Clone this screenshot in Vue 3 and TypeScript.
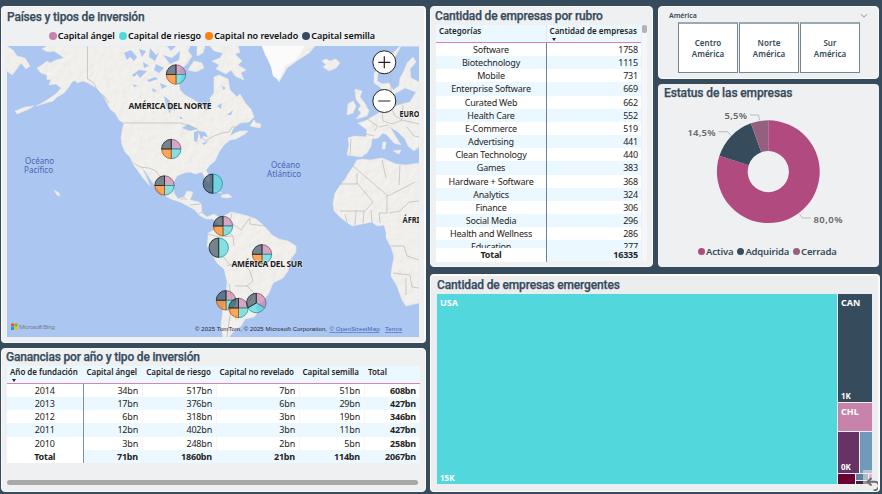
<script setup lang="ts">
interface Pin { x: number; y: number; kinds: string[] }
interface Cell { name: string; count: number }

const colors: Record<string, string> = {
  angel: '#c783ac', riesgo: '#52d8dc', oculto: '#ff7f0e', semilla: '#364b5b',
}
const mapLegend = [
  { key: 'angel', label: 'Capital ángel' },
  { key: 'riesgo', label: 'Capital de riesgo' },
  { key: 'oculto', label: 'Capital no revelado' },
  { key: 'semilla', label: 'Capital semilla' },
]
const all = ['angel', 'riesgo', 'oculto', 'semilla']
const pins: Pin[] = [
  { x: 176, y: 74.5, kinds: all },
  { x: 171.3, y: 149, kinds: all },
  { x: 164.5, y: 185.5, kinds: all },
  { x: 212.8, y: 183.7, kinds: ['riesgo', 'semilla'] },
  { x: 223, y: 226, kinds: all },
  { x: 218.7, y: 247.7, kinds: ['riesgo', 'semilla'] },
  { x: 262, y: 254.3, kinds: all },
  { x: 226, y: 300.3, kinds: all },
  { x: 238.5, y: 308, kinds: all },
  { x: 256.3, y: 303, kinds: ['angel', 'riesgo', 'semilla'] },
]

function point(cx: number, cy: number, r: number, share: number): string {
  const a = share * Math.PI * 2
  return `${(cx + r * Math.sin(a)).toFixed(2)} ${(cy - r * Math.cos(a)).toFixed(2)}`
}
function wedge(pin: Pin, i: number): string {
  const n = pin.kinds.length
  return `M${pin.x} ${pin.y}L${point(pin.x, pin.y, 9.7, i / n)}A9.7 9.7 0 0 1 ${point(pin.x, pin.y, 9.7, (i + 1) / n)}Z`
}
const strokes: Record<string, string> = {
  angel: '#85526f', riesgo: '#23969b', oculto: '#a95510', semilla: '#16222b',
}

const years = [
  ['2014', '34bn', '517bn', '7bn', '51bn', '608bn'],
  ['2013', '17bn', '376bn', '6bn', '29bn', '427bn'],
  ['2012', '6bn', '318bn', '3bn', '19bn', '346bn'],
  ['2011', '12bn', '402bn', '3bn', '11bn', '427bn'],
  ['2010', '3bn', '248bn', '2bn', '5bn', '258bn'],
  ['Total', '71bn', '1860bn', '21bn', '114bn', '2067bn'],
]
const yearHeads = ['Año de fundación', 'Capital ángel', 'Capital de riesgo', 'Capital no revelado', 'Capital semilla', 'Total']

const categories: Cell[] = [
  { name: 'Software', count: 1758 },
  { name: 'Biotechnology', count: 1115 },
  { name: 'Mobile', count: 731 },
  { name: 'Enterprise Software', count: 669 },
  { name: 'Curated Web', count: 662 },
  { name: 'Health Care', count: 552 },
  { name: 'E-Commerce', count: 519 },
  { name: 'Advertising', count: 441 },
  { name: 'Clean Technology', count: 440 },
  { name: 'Games', count: 383 },
  { name: 'Hardware + Software', count: 368 },
  { name: 'Analytics', count: 324 },
  { name: 'Finance', count: 306 },
  { name: 'Social Media', count: 296 },
  { name: 'Health and Wellness', count: 286 },
  { name: 'Education', count: 277 },
]
const regions = ['Centro', 'Norte', 'Sur']

const status = [
  { label: 'Activa', from: 0, to: 0.8, color: '#b14a7e' },
  { label: 'Adquirida', from: 0.8, to: 0.945, color: '#364b5b' },
  { label: 'Cerrada', from: 0.945, to: 1, color: '#93617f' },
]
function ring(from: number, to: number): string {
  const big = to - from > 0.5 ? 1 : 0
  const cx = 110.3
  const cy = 63.7
  return `M${point(cx, cy, 51.4, from)}A51.4 51.4 0 ${big} 1 ${point(cx, cy, 51.4, to)}`
    + `L${point(cx, cy, 20.6, to)}A20.6 20.6 0 ${big} 0 ${point(cx, cy, 20.6, from)}Z`
}

const land = [
  // North and Central America
  'M47 46L42 49L48 52L54 51L60 55L64 58L56 60L50 63L47 61L42 65L37 68L41 73L47 75L47 80L51 79L49 85L56 84L61 88L57 93L50 98L42 103L36 106L46 103L53 101L57 97L64 93L69 87L71 83L75 80L77 83L83 81L88 83L95 87L100 92L104 97L107 103L110 109L115 113L119 120L124 123L122 131L121 138L122 145L125 152L130 157L133 164L138 171L143 178L150 186L148 181L145 174L142 168L145 171L150 179L156 187L162 194L171 199L180 202L188 206L195 210L199 215L206 219L213 219L220 225L222 219L214 214L207 217L202 213L201 204L199 202L190 200L193 192L187 191L184 197L178 199L174 193L173 183L177 176L184 173L190 172L195 174L202 172L206 180L209 183L210 178L206 170L210 165L215 161L219 152L224 145L230 140L236 139L245 134L248 131L240 131L235 133L230 136L233 129L240 123L249 122L254 117L251 109L246 104L240 94L237 97L230 90L228 79L219 75L214 77L214 85L214 93L210 98L211 107L206 111L202 105L194 100L185 95L180 90L179 83L182 76L178 71L187 64L192 56L188 51L190 46Z',
  // Arctic islands
  'M194 61L202 63L204 68L196 72L188 70Z',
  'M197 46L205 46L203 53L197 56Z',
  'M210 46L238 46L240 52L235 54L242 61L238 65L246 70L241 73L244 80L235 76L231 70L226 74L216 69L219 65L212 61L220 58L223 53L214 51Z',
  'M250 126L254 120L256 123L261 124L260 128L255 127Z',
  // Greenland and Iceland
  'M262 46L266 56L271 61L273 72L279 82L282 77L287 68L298 60L309 53L315 46Z',
  'M322 61L326 65L323 67L329 71L336 68L340 63L336 59L330 61L326 59Z',
  // British Isles
  'M355 89L362 91L360 97L364 102L369 111L367 116L356 119L361 113L358 109L361 106L356 99Z',
  'M348 104L353 101L356 106L353 113L347 115Z',
  // Europe
  'M419 46L401 46L395 57L388 65L378 72L377 81L383 84L389 83L393 90L399 86L400 78L404 71L407 63L413 57L416 62L410 69L411 78L419 82L419 147L414 151L408 146L405 139L398 132L390 127L396 137L401 145L394 143L387 135L383 133L378 138L372 139L371 146L367 153L361 157L354 156L347 155L349 145L348 138L354 136L366 137L367 130L358 123L365 121L372 117L382 111L389 107L386 98L391 98L395 106L410 102L416 92L405 88L396 93L390 95L385 92L380 87L374 83L374 73L385 64L394 52L400 46Z',
  'M383 142L386 142L385 149L382 149Z',
  'M393 151L401 150L399 154Z',
  // Africa
  'M419 163L406 165L396 164L387 160L382 158L370 160L362 159L357 160L353 167L348 174L346 178L341 184L335 193L333 203L334 211L340 217L345 221L352 226L362 224L372 222L377 226L384 225L386 232L386 238L391 247L394 257L392 267L391 276L397 286L402 300L406 306L419 303Z',
  // South America
  'M220 221L224 216L231 212L240 214L248 216L256 219L262 224L267 229L272 235L279 239L288 241L296 246L296 252L290 260L288 271L283 278L273 283L269 293L263 301L255 307L258 312L254 317L245 319L241 326L235 330L229 337L223 337L221 325L223 310L226 298L227 281L224 269L217 263L211 252L207 246L208 238L208 233L214 230L219 226Z',
  // Small islands
  'M17 56L25 58L30 66L26 69L21 63L17 69L12 75L7 71L7 46L13 50Z',
  'M205 188L214 190L222 193L214 191Z',
  'M222 195L228 194L232 197L227 198L221 197Z',
  'M54 190L59 193L60 196L57 195Z',
  'M15 111L25 107L34 106L29 109L17 114Z',
]
const lakes = [
  'M124 53L131 50L137 57L134 61L130 57L127 60Z',
  'M132 75L139 70L147 71L140 78L137 74L134 77Z',
  'M147 80L155 77L158 79L149 82Z',
  'M164 96L169 100L175 111L171 109L170 114L166 105Z',
  'M182 128L188 124L197 129L190 131Z',
  'M194 132L199 131L197 142L194 141Z',
  'M199 131L205 132L208 137L203 136L201 140Z',
  'M202 143L209 141L204 145Z',
  'M139 49L146 51L142 57Z', 'M150 48L156 55L159 53L155 61L149 57Z',
  'M163 55L172 58L180 51L179 60L170 64Z',
  'M156 64L164 68L159 73L154 70Z',
  'M160 83L167 86L162 89Z', 'M143 62L149 66L144 68Z',
  'M217 106L222 103L221 109Z', 'M227 115L233 110L231 115Z',
  'M180 116L183 119L180 119Z', 'M222 86L226 88L223 90Z', 'M167 46L176 46L171 51Z',
  'M152 88L157 91L153 92Z', 'M133 84L138 86L134 87Z',
]
const borders = [
  'M87.500 46V79L94 83L98 92L104 96L109 103',
  'M124 123H180L190 126L197 129L201 136L205 141L214 136L222 133L229 132L232 127L237 127',
  'M132 162L140 167L149 168L156 171L161 178L167 182',
  'M181 200L184 198L187 200M190 205L200 204M198 214L202 212',
  'M223 217L222 227L233 236L234 246M232 213L230 222L241 230L249 219M208 234L219 237L233 236M218 239L219 252L226 260L231 266M250 217V224L265 226M227 266L240 261L250 271L253 281L247 286L235 286M229 284L232 301L227 337M247 286L254 293L249 301',
  'M357 173V184L337 184M353 166L388 196L415 182M357 183L373 202L365 211H340M387 195L387 213L379 213L380 223M345 214L347 222M356 211L355 225M364 211L363 223M371 210L372 222M389 213L400 211L409 202L419 201M391 246H404L407 256L419 260M393 273L410 275L412 287L419 288M406 278V295M382 160L386 178M400 165L399 185',
  'M365 117L374 124L378 126L374 131M374 136L366 134M351 139L350 155M382 112L383 121L392 124L402 120L419 124M391 107L395 116L402 120M379 127L388 125M403 105L402 119M407 127L414 136L419 137M391 97V70L398 55',
]
</script>

<template>
  <main class="dashboard">
    <div class="column left">
      <section class="panel map-panel">
        <h2>Países y tipos de inversión</h2>
        <div class="legend map-legend">
          <span v-for="l in mapLegend" :key="l.key"><i :class="l.key" />{{ l.label }}</span>
        </div>
        <svg class="map" viewBox="7 46 412 291" width="412" height="291">
          <defs>
            <filter id="relief" x="0" y="0" width="100%" height="100%">
              <feTurbulence type="fractalNoise" baseFrequency=".12" numOctaves="3" seed="4" />
              <feDiffuseLighting surfaceScale="1.1" lighting-color="#f6f5f2" result="lit">
                <feDistantLight azimuth="225" elevation="66" />
              </feDiffuseLighting>
              <feComposite in="lit" in2="SourceGraphic" operator="in" />
            </filter>
          </defs>
          <rect x="7" y="46" width="412" height="291" fill="#abc6f1" />
          <g fill="#f3f1ee" stroke="#e6e6e6" stroke-width=".6" stroke-linejoin="round">
            <path v-for="d in land" :key="d" :d="d" />
          </g>
          <g filter="url(#relief)" opacity=".3" fill="#fff">
            <path v-for="d in land" :key="d" :d="d" />
          </g>
          <path d="M262 46L266 56L271 67L273 76L279 80L285 66L296 59L305 46Z" fill="#fbfbfb" />
          <g fill="#abc6f1"><path v-for="d in lakes" :key="d" :d="d" /></g>
          <g fill="none" stroke="#b9b9b7" stroke-width=".7" stroke-linejoin="round">
            <path v-for="d in borders" :key="d" :d="d" />
          </g>
          <g class="sea">
            <text x="25" y="163.500" textLength="29">Océano</text>
            <text x="24" y="173" textLength="29">Pacífico</text>
            <text x="271" y="167.500" textLength="29">Océano</text>
            <text x="267" y="177" textLength="34">Atlántico</text>
          </g>
          <g v-for="(p, n) in pins" :key="n">
            <path
              v-for="(k, i) in p.kinds" :key="k" :d="wedge(p, i)" :fill="colors[k]"
              :stroke="strokes[k]" fill-opacity=".66" stroke-width=".8"
            />
          </g>
          <g class="land-name">
            <text x="128.500" y="108.500" textLength="83">AMÉRICA DEL NORTE</text>
            <text x="231.500" y="267" textLength="71">AMÉRICA DEL SUR</text>
            <text x="399.500" y="117" textLength="20" lengthAdjust="spacingAndGlyphs">EURO</text>
            <text x="402.500" y="222.500" textLength="17" lengthAdjust="spacingAndGlyphs">ÁFRI</text>
          </g>
          <g fill="#fff" stroke="#222" stroke-width="1">
            <circle cx="384.300" cy="62.300" r="11.500" />
            <circle cx="384.300" cy="101" r="11.500" />
            <path d="M378.300 62.300H390.300M384.300 56.300V68.300M378.300 101H390.300" stroke-width="1.200" />
          </g>
          <path d="M11 323.500h3v3h-3z" fill="#f25022" />
          <path d="M14.500 323.500h3v3h-3z" fill="#7fba00" />
          <path d="M11 327h3v3h-3z" fill="#00a4ef" />
          <path d="M14.500 327h3v3h-3z" fill="#ffb900" />
          <text class="bing" x="19" y="329.300" textLength="36">Microsoft Bing</text>
          <g class="credit">
            <text x="195" y="331" textLength="132">© 2025 TomTom, © 2025 Microsoft Corporation,</text>
            <text class="link" x="329.500" y="331" textLength="50">© OpenStreetMap</text>
            <text class="link" x="385" y="331" textLength="17">Terms</text>
          </g>
        </svg>
      </section>

      <section class="panel years-panel">
        <h2>Ganancias por año y tipo de inversión</h2>
        <div class="years">
          <div class="row head">
            <span v-for="(h, i) in yearHeads" :key="h">{{ h }}<b v-if="i === 0" class="sort" /></span>
          </div>
          <div v-for="y in years" :key="y[0]" class="row">
            <span v-for="(v, i) in y" :key="i">{{ v }}</span>
          </div>
        </div>
        <div class="scroll-x" />
      </section>
    </div>

    <div class="column right">
      <div class="top">
        <section class="panel categories-panel">
          <h2>Cantidad de empresas por rubro</h2>
          <div class="scroll-area">
            <div class="categories">
              <div class="row head"><span>Categorías</span><span>Cantidad de empresas<b class="sort" /></span></div>
              <div class="rows">
                <div v-for="c in categories" :key="c.name" class="row">
                  <span>{{ c.name }}</span><span>{{ c.count }}</span>
                </div>
              </div>
              <div class="row total"><span>Total</span><span>16335</span></div>
            </div>
            <div class="scroll-y"><i /></div>
          </div>
        </section>

        <div class="side">
          <section class="panel slicer">
            <header>
              <span>América</span>
              <svg width="8" height="6" viewBox="0 0 8 6"><path d="M1 1.200L4 4.200L7 1.200" fill="none" stroke="#8b929a" /></svg>
            </header>
            <div class="tiles">
              <button v-for="r in regions" :key="r" type="button">{{ r }}<br>América</button>
            </div>
          </section>

          <section class="panel status-panel">
            <h2>Estatus de las empresas</h2>
            <svg class="donut" viewBox="0 0 221 130" width="221" height="130">
              <path v-for="s in status" :key="s.label" :d="ring(s.from, s.to)" :fill="s.color" />
              <g fill="none" stroke="#b9bcc0">
                <path d="M92 7H100.500L101.700 12.500M60.500 23.700H69.500L73.500 28M141 105.500L144.500 110H152.500" />
              </g>
              <g class="share">
                <text x="66.500" y="11" textLength="22.500">5,5%</text>
                <text x="29.500" y="28" textLength="28">14,5%</text>
                <text x="155.500" y="115" textLength="29">80,0%</text>
              </g>
            </svg>
            <div class="legend status-legend">
              <span v-for="s in status" :key="s.label"><i :class="s.label.toLowerCase()" />{{ s.label }}</span>
            </div>
          </section>
        </div>
      </div>

      <section class="panel tree-panel">
        <h2>Cantidad de empresas emergentes</h2>
        <div class="tree">
          <div class="leaf usa"><span>USA</span><span>15K</span></div>
          <div class="leaf can"><span>CAN</span><span>1K</span></div>
          <div class="leaf chl"><span>CHL</span></div>
          <div class="pair">
            <div class="leaf plum"><span>0K</span></div>
            <div class="leaf blue" />
          </div>
          <div class="tiny">
            <div class="wine" /><div class="slate" /><div class="pink" /><div class="night" />
          </div>
        </div>
        <div class="undo">
          <svg width="18" height="23" viewBox="0 0 18 23">
            <path d="M8.500 8L4.500 11.800L8.500 15.500M5 11.800H11.500C15.500 11.800 16.500 15 15.500 17.500C14.800 19.300 13 20.500 10.500 20.500" fill="none" stroke="#6b6b6b" stroke-width="2" />
          </svg>
        </div>
      </section>
    </div>
  </main>
</template>

<style>
body { background: #364b5b; overflow: hidden; }
</style>

<style scoped>
* { box-sizing: border-box; }
.dashboard {
  width: 882px; height: 494px; padding: 6px 2px 2px 1px; background: #364b5b;
  display: flex; gap: 4px; font-family: "Noto Sans", "Open Sans", sans-serif; color: #252423;
}
.column { display: flex; flex-direction: column; }
.left { width: 425px; gap: 5px; }
.right { width: 450px; gap: 7px; }
.panel { background: #eff0f2; border-radius: 4px; border: 1px solid #f9f9fa; overflow: hidden; display: flex; flex-direction: column; }
h2 {
  margin: 0; font: 500 12px/14px Roboto, sans-serif; color: #364b5b;
  white-space: nowrap; -webkit-text-stroke: .25px #364b5b;
}
.map-panel { height: 337px; padding: 3px 5px; border-right: 2px solid #fff; }
.years-panel { height: 144px; padding: 1px 4px 0 5px; }
.map-panel h2 { letter-spacing: -.2px; }
.years-panel h2 { letter-spacing: -.19px; margin-left: -1px; }
.legend { display: flex; font-weight: 600; white-space: nowrap; }
.legend span { display: flex; align-items: center; }
.legend i { width: 8px; height: 8px; border-radius: 50%; }
.map-legend { height: 13px; margin: 5px 0 4px 42px; font-size: 9px; gap: 4.300px; letter-spacing: -.03px; color: #111; }
.map-legend i { margin-right: .8px; }
.angel { background: #c783ac; }
.riesgo { background: #52d8dc; }
.oculto { background: #ff7f0e; }
.semilla { background: #364b5b; }
.map { display: block; flex: none; }
.sea { font-size: 8px; fill: #4c62b4; }
.land-name { font-size: 8.500px; font-weight: 700; fill: #1d1d1d; stroke: #fff; stroke-width: 1.200px; stroke-opacity: .6; paint-order: stroke; }
.bing { font-size: 6px; fill: #757b88; }
.credit { font: 6px "Liberation Sans", sans-serif; fill: #1e2530; }
.link { fill: #4160b8; text-decoration: underline; }

.row { display: grid; height: 13.170px; font-size: 9px; line-height: 13px; letter-spacing: -.2px; background: #fff; white-space: nowrap; }
.row:nth-child(odd):not(.head) { background: #ecf8ff; }
.row span { text-align: right; position: relative; }
.row.head { height: 18px; background: #ecf8ff; border-bottom: 1px solid #d883b0; font-size: 8px; font-weight: 600; letter-spacing: -.1px; line-height: 12px; }
.sort { position: absolute; left: 5px; bottom: 1px; border: 2.500px solid transparent; border-top: 3px solid #222; border-bottom: 0; }
.years { margin-top: 2px; width: 413px; }
.years .row { grid-template-columns: 76.500px 59.500px 74px 83px 65px 55px; }
.years .row span { padding-right: 4px; border-right: 1px solid #f3f5f7; }
.years .row span:first-child { text-align: center; padding: 0; border-right: 1px solid #7e909e; }
.years .row:not(.head) span:last-child, .years .row:last-child { font-weight: 700; }
.years .row:last-child { background: #ecf8ff; }
.years .row:last-child span:first-child { background: #fff; }
.years .row.head { letter-spacing: -.04px; }
.years .row.head span { border-color: transparent; padding-right: 5px; }
.years .row.head span:first-child { border-color: transparent; text-align: left; padding: 0 0 0 3px; }
.years .row.head span:last-child { text-align: left; padding-left: 3px; }
.years .row:not(.head) span:last-child { padding-right: 3px; }
.scroll-x { height: 5px; width: 411px; border-radius: 3px; background: #a8a8a6; margin-top: 17px; }

.top { display: flex; gap: 5px; height: 261px; }
.categories-panel { width: 223px; padding: 2px 5px; }
.categories-panel h2 { margin-left: -1px; letter-spacing: -.16px; }
.scroll-area { display: flex; margin-top: 2px; }
.categories { width: 205px; }
.categories .row { grid-template-columns: 111px 94px; }
.categories .row span:first-child { text-align: center; border-right: 1px solid #6f8291; }
.categories .row span:last-child { padding-right: 3px; }
.categories .row.head { letter-spacing: .03px; }
.categories .row.head span:last-child { padding-right: 4px; }
.categories .row.head span:first-child { text-align: left; padding-left: 3px; border-color: #dfeaf1; }
.rows { height: 205px; overflow: hidden; }
.rows .row:nth-child(odd) { background: #fff; }
.rows .row:nth-child(even) { background: #ecf8ff; }
.categories .row.total { font-weight: 700; background: #ecf8ff; line-height: 14px; }
.total span:first-child { background: #fff; }
.scroll-y { width: 6px; margin-left: 1px; background: #f5f6f8; }
.scroll-y i { display: block; width: 5px; height: 8px; border-radius: 2px; background: #b1b1b1; }

.side { width: 221px; display: flex; flex-direction: column; gap: 5px; }
.slicer { height: 73px; padding: 3px 10px 0; }
.slicer header { height: 11px; display: flex; align-items: center; justify-content: space-between; font-size: 7px; font-weight: 600; color: #364b5b; letter-spacing: -.05px; }
.tiles { display: flex; gap: 1px; padding: 1px 0 0 9px; }
.tiles button {
  width: 60px; height: 51px; padding: 0; background: #fff; border: 1px solid #748692;
  border-top: 2px solid #9ba9b2; font: 600 8px/11px "Noto Sans", sans-serif; letter-spacing: .05px; color: #364b5b;
}
.status-panel { height: 183px; padding: 2px 0 0; border: 0; }
.status-panel h2 { padding-left: 6px; letter-spacing: -.12px; }
.donut { display: block; margin-top: 8px; flex: none; }
.share { font-size: 9.500px; font-weight: 600; fill: #666; }
.status-legend { height: 13px; margin: 7px 0 0 40px; font-size: 9.500px; gap: 4px; color: #364b5b; letter-spacing: -.18px; }
.status-legend i { width: 7px; height: 7px; margin-right: 1px; }
.activa { background: #b14a7e; }
.adquirida { background: #364b5b; }
.cerrada { background: #93617f; }

.tree-panel { height: 218px; padding: 2px 6px; border: 2px solid #fbfbfc; border-left-width: 1px; border-bottom-width: 1px; background: #ecedef; position: relative; }
.tree-panel h2 { letter-spacing: -.14px; }
.tree { margin-top: 2px; width: 435px; height: 190px; display: grid; gap: 1px; grid-template: 108px 28px 41px 10px / 400px 34px; }
.leaf { color: #fff; font-size: 9px; font-weight: 700; line-height: 12px; padding: 3px 3px 0; display: flex; flex-direction: column; justify-content: space-between; }
.leaf span:nth-child(2) { font-size: 8px; }
.usa { grid-row: 1 / 5; background: #52d8dc; }
.can { background: #364b5b; }
.chl { background: #c783a9; }
.pair { display: grid; grid-template-columns: 21px 12px; gap: 1px; }
.plum { background: #673366; justify-content: flex-end; }
.plum span { font-size: 8px; }
.blue { background: #7199b8; }
.tiny { display: grid; grid-template: 6px 3px / 17px 12px 3px; gap: 1px; }
.wine { background: #6b0032; grid-row: 1 / 3; }
.slate { background: #5d839c; }
.pink { background: #f46bb0; }
.night { background: #3c2244; }
.undo { position: absolute; right: -3px; bottom: -2px; width: 18px; height: 23px; background: rgba(236, 237, 239, .55); }
</style>
